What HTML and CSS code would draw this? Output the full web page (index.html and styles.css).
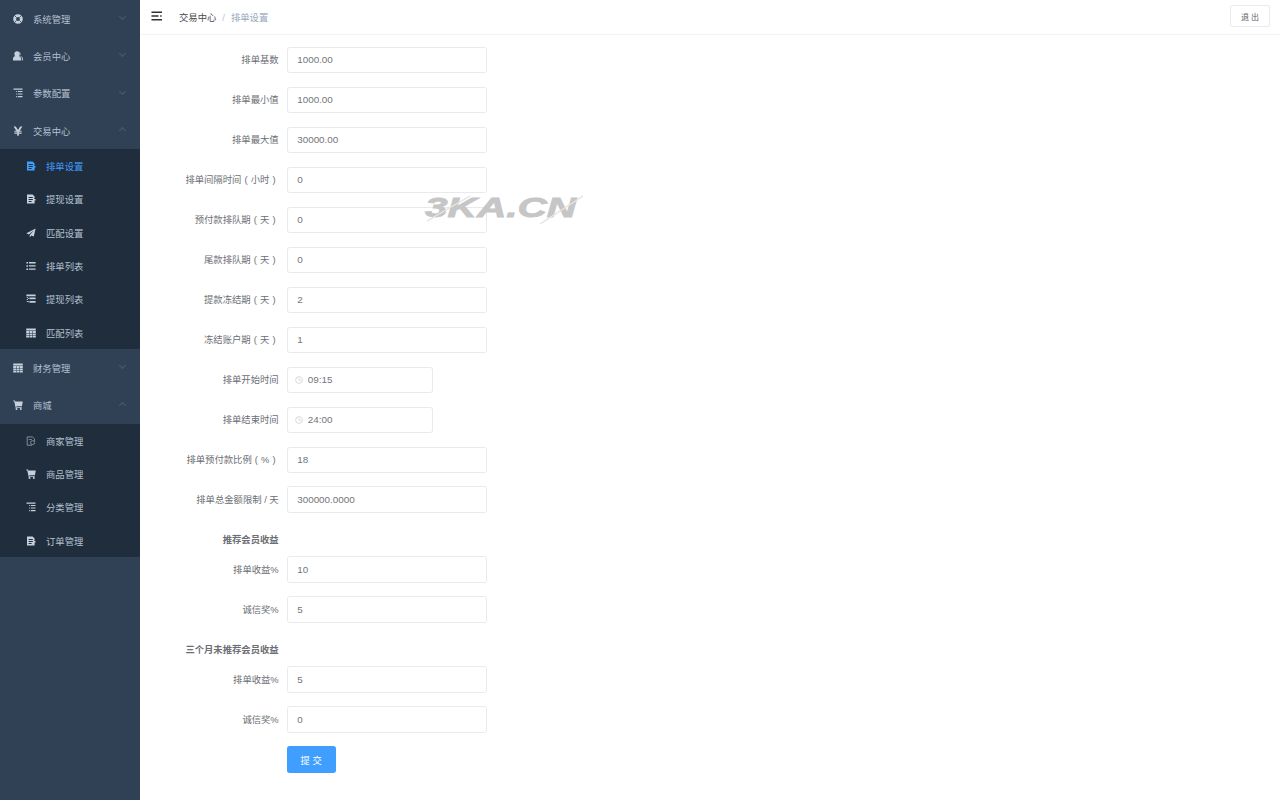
FILE: index.html
```html
<!DOCTYPE html>
<html>
<head>
    <meta charset="utf-8">
    <title>排单设置</title>
    <link rel="stylesheet" href="styles.css">
</head>
<body>
<svg class="defs" width="0" height="0">
    <symbol id="i-ring" viewBox="0 0 10 10"><path fill-rule="evenodd" d="M5 .2a4.8 4.8 0 1 1 0 9.600 4.800 4.800 0 0 1 0-9.600zM5 3.100a1.900 1.900 0 1 0 0 3.800 1.900 1.900 0 0 0 0-3.800z"/><path class="notch" d="M1.400 1.400L3.600 3.600M8.600 1.400L6.400 3.600M1.400 8.600L3.600 6.400M8.600 8.600L6.400 6.400"/></symbol>
    <symbol id="i-users" viewBox="0 0 10 10"><circle cx="4" cy="2.900" r="2.600"/><path d="M0 9.500V7.500C0 6 1.400 5.300 2.600 5h2.800c1.200.3 2.600 1 2.600 2.500v2z"/><path d="M6.500.8a2.400 2.400 0 0 1 0 4c1.800.3 3.500 1.200 3.500 2.800v1.900H8.800V7.300c0-1.100-.9-1.900-2.300-2.500z" opacity=".85"/></symbol>
    <symbol id="i-indent" viewBox="0 0 10 10"><path d="M.5 .6h9v1.100h-9zM5 3.100h4.500v1H5zM5 5.600h4.500v1H5zM5 8.100h4.500v1.100H5zM3.200 3.100h1v1h-1zM3.200 5.600h1v1h-1zM3.200 8.100h1v1.100h-1z"/></symbol>
    <symbol id="i-yen" viewBox="0 0 10 10"><path d="M.6 .4h2.200L5 4l2.200-3.600h2.200L6.700 4.700h1.900v1.100H5.800v.8h2.800v1.100H5.800v2H4.200v-2H1.400V6.600h2.800v-.8H1.400V4.700h1.900z"/></symbol>
    <symbol id="i-doc" viewBox="0 0 10 10"><path fill-rule="evenodd" d="M1 .4h5.600l2 2v2.100H8V5H9.500v1.600H8.600v3H1zM2.600 3v.9h4.200V3zm0 2v.9h4.200V5zm0 2v.9h3V7z"/></symbol>
    <symbol id="i-send" viewBox="0 0 10 10"><path d="M9.600.4L7.800 8.600 5.200 7.400 3.800 9.400V7L8 2.200 2.800 6.400.4 5.200z"/></symbol>
    <symbol id="i-list" viewBox="0 0 10 10"><path d="M.4 1h1.700v1.600H.4zM3 1.100h6.600v1.300H3zM.4 4.200h1.700v1.600H.4zM3 4.300h6.600v1.300H3zM.4 7.400h1.700v1.600H.4zM3 7.500h6.600v1.300H3z"/></symbol>
    <symbol id="i-tree" viewBox="0 0 10 10"><path d="M.4.500h9.200v1.800H.4zM3.400 3.500h6.200v1.800H3.400zM3.400 6.900h6.200v1.800H3.400zM.8 3h1v1h-1zM.8 5h1v1h-1zM.8 7h1v1h-1zM1.800 4h1v.9h-1zM1.800 7.300h1v.9h-1z"/></symbol>
    <symbol id="i-grid" viewBox="0 0 10 10"><path d="M.2.600h9.600v1.800H.2zM.2 2.900h2.900v2h-2.900zM3.600 2.900h2.800v2H3.600zM6.900 2.900h2.900v2H6.900zM.2 5.400h2.900v1.700h-2.900zM3.600 5.400h2.800v1.700H3.600zM6.900 5.400h2.900v1.700H6.900zM.2 7.600h2.900v1.800h-2.900zM3.600 7.600h2.800v1.800H3.600zM6.900 7.600h2.900v1.800H6.900z"/></symbol>
    <symbol id="i-cart" viewBox="0 0 10 10"><path d="M.2.400h1.800l.3 1.200h7.500L8.900 6.200H3.300l.2.700h5.300v.9H2.600L1.200 1.300H.2z"/><circle cx="3.500" cy="8.900" r="1"/><circle cx="7.800" cy="8.900" r="1"/></symbol>
    <symbol id="i-shop" viewBox="0 0 10 10"><path fill="none" stroke="currentColor" stroke-width="1" d="M6 9.200H1.200V.9h5.200l2.200 2v2.400"/><circle cx="6.600" cy="6.600" r="2" fill="none" stroke="currentColor" stroke-width="1"/><path d="M2.600 3.200h3.400v.8H2.600z"/></symbol>
</svg>

<div class="sidebar">
    <div class="menu-item"><svg class="icon"><use href="#i-ring"/></svg><span>系统管理</span><i class="arrow down"></i></div>
    <div class="menu-item"><svg class="icon"><use href="#i-users"/></svg><span>会员中心</span><i class="arrow down"></i></div>
    <div class="menu-item"><svg class="icon"><use href="#i-indent"/></svg><span>参数配置</span><i class="arrow down"></i></div>
    <div class="menu-item"><svg class="icon"><use href="#i-yen"/></svg><span>交易中心</span><i class="arrow up"></i></div>
    <ul class="sub-menu">
        <li class="active"><svg class="icon"><use href="#i-doc"/></svg><span>排单设置</span></li>
        <li><svg class="icon"><use href="#i-doc"/></svg><span>提现设置</span></li>
        <li><svg class="icon"><use href="#i-send"/></svg><span>匹配设置</span></li>
        <li><svg class="icon"><use href="#i-list"/></svg><span>排单列表</span></li>
        <li><svg class="icon"><use href="#i-tree"/></svg><span>提现列表</span></li>
        <li><svg class="icon"><use href="#i-grid"/></svg><span>匹配列表</span></li>
    </ul>
    <div class="menu-item"><svg class="icon"><use href="#i-grid"/></svg><span>财务管理</span><i class="arrow down"></i></div>
    <div class="menu-item"><svg class="icon"><use href="#i-cart"/></svg><span>商城</span><i class="arrow up"></i></div>
    <ul class="sub-menu">
        <li><svg class="icon dim"><use href="#i-shop"/></svg><span>商家管理</span></li>
        <li><svg class="icon"><use href="#i-cart"/></svg><span>商品管理</span></li>
        <li><svg class="icon"><use href="#i-indent"/></svg><span>分类管理</span></li>
        <li><svg class="icon"><use href="#i-doc"/></svg><span>订单管理</span></li>
    </ul>
</div>

<div class="main">
    <div class="navbar">
        <svg class="toggle" viewBox="0 0 12 10"><path d="M.5 .5h10.500v1.500H.5zM.5 4.200h7v1.500h-7zM.5 7.900h10.500v1.500H.5zM9.200 3.900l2.200 1-2.200 1z"/></svg>
        <div class="breadcrumb"><span class="crumb">交易中心</span><span class="sep">/</span><span class="current">排单设置</span></div>
        <button class="logout">退 出</button>
    </div>

    <form class="form">
        <div class="row"><label>排单基数</label><input class="input" value="1000.00"></div>
        <div class="row"><label>排单最小值</label><input class="input" value="1000.00"></div>
        <div class="row"><label>排单最大值</label><input class="input" value="30000.00"></div>
        <div class="row"><label>排单间隔时间<span class="paren">(</span>小时<span class="paren">)</span></label><input class="input" value="0"></div>
        <div class="row"><label>预付款排队期<span class="paren">(</span>天<span class="paren">)</span></label><input class="input" value="0"></div>
        <div class="row"><label>尾款排队期<span class="paren">(</span>天<span class="paren">)</span></label><input class="input" value="0"></div>
        <div class="row"><label>提款冻结期<span class="paren">(</span>天<span class="paren">)</span></label><input class="input" value="2"></div>
        <div class="row"><label>冻结账户期<span class="paren">(</span>天<span class="paren">)</span></label><input class="input" value="1"></div>
        <div class="row"><label>排单开始时间</label>
            <div class="time"><svg class="clock" viewBox="0 0 10 10"><circle cx="5" cy="5" r="4.200"/><path d="M5 2.600V5.300h2.200"/></svg><input value="09:15"></div>
        </div>
        <div class="row"><label>排单结束时间</label>
            <div class="time"><svg class="clock" viewBox="0 0 10 10"><circle cx="5" cy="5" r="4.200"/><path d="M5 2.600V5.300h2.200"/></svg><input value="24:00"></div>
        </div>
        <div class="row"><label>排单预付款比例<span class="paren">(</span>%<span class="paren">)</span></label><input class="input" value="18"></div>
        <div class="row"><label>排单总金额限制 / 天</label><input class="input" value="300000.0000"></div>

        <div class="row title"><label>推荐会员收益</label></div>
        <div class="row"><label>排单收益%</label><input class="input" value="10"></div>
        <div class="row"><label>诚信奖%</label><input class="input" value="5"></div>

        <div class="row title"><label>三个月未推荐会员收益</label></div>
        <div class="row"><label>排单收益%</label><input class="input" value="5"></div>
        <div class="row"><label>诚信奖%</label><input class="input" value="0"></div>

        <div class="row"><label></label><button type="button" class="submit">提 交</button></div>
    </form>

    <div class="watermark">
        <span>3KA.CN</span>
        <svg class="streaks" viewBox="0 0 160 30">
            <path d="M2 28L45 3M115 31L158 3"/>
            <path class="cut" d="M2 28L45 3M115 31L158 3"/>
        </svg>
    </div>
</div>
</body>
</html>
```

FILE: styles.css
```css
* {
    box-sizing: border-box;
    font-family: "Liberation Sans", "Noto Sans CJK SC", sans-serif;
}

html, body {
    height: 100%;
    margin: 0;
    overflow: hidden;
}

body {
    display: flex;
    font-size: 9.33px;
    color: #6c6e74;
}

.defs {
    position: absolute;
}

/* sidebar */
.sidebar {
    width: 140px;
    flex: none;
    background: #304156;
    color: #b4c0ce;
}

.menu-item {
    height: 37.33px;
    display: flex;
    align-items: center;
    padding: 0 13px;
}

.icon {
    width: 10px;
    height: 10px;
    margin-right: 10px;
    flex: none;
    fill: currentColor;
    color: #c6d0dc;
}

.icon.dim {
    color: #7f8c9b;
}

.notch {
    fill: none;
    stroke: #304156;
    stroke-width: .8;
}

.arrow {
    width: 5px;
    height: 5px;
    margin-left: auto;
    margin-right: 2px;
    border: solid #4b5c71;
    border-width: 0 1px 1px 0;
}

.arrow.down {
    margin-bottom: 4px;
    transform: rotate(45deg);
}

.arrow.up {
    margin-bottom: 0;
    transform: rotate(225deg);
}

.sub-menu {
    margin: 0;
    padding: 0;
    list-style: none;
    background: #1f2d3d;
}

.sub-menu li {
    height: 33.33px;
    display: flex;
    align-items: center;
    padding-left: 26px;
}

.sub-menu li.active,
.sub-menu li.active .icon {
    color: #409eff;
}

/* main */
.main {
    flex: 1;
    position: relative;
}

.navbar {
    height: 35px;
    display: flex;
    align-items: center;
    padding: 0 10px 0 11px;
    border-bottom: 1px solid #f2f3f5;
}

.toggle {
    width: 12px;
    height: 10px;
    margin-right: 16px;
    margin-bottom: 3px;
    fill: #303133;
}

.breadcrumb {
    flex: 1;
}

.crumb {
    color: #4a4b4f;
}

.sep {
    margin: 0 6px;
    color: #c0c4cc;
}

.current {
    color: #97a8be;
}

.logout {
    width: 40px;
    height: 22px;
    margin-bottom: 2px;
    padding: 0;
    font-size: 8px;
    color: #606266;
    background: #fff;
    border: 1px solid #e8eaee;
    border-radius: 2px;
}

.form {
    padding-top: 11.67px;
}

.row {
    display: flex;
    align-items: center;
    height: 26.67px;
    margin-bottom: 13.33px;
}

.row label {
    width: 138.67px;
    flex: none;
    margin-right: 8px;
    padding-bottom: 1px;
    text-align: right;
    white-space: nowrap;
}

/* brackets sit centred in a full character cell */
.paren {
    display: inline-block;
    width: 9.33px;
    text-align: center;
}

.row.title {
    margin-bottom: 3.33px;
}

.row.title label {
    font-weight: bold;
}

.input,
.time {
    height: 26.67px;
    background: #fff;
    border: 1px solid #e8eaee;
    border-radius: 2.67px;
    font-size: 9.9px;
    color: #73757a;
    outline: none;
}

.input {
    width: 200px;
    padding: 0 9.5px 1px;
}

.time {
    width: 146.67px;
    display: flex;
    align-items: center;
    padding-left: 7px;
}

.time input {
    width: 100px;
    padding: 0 0 1px;
    border: 0;
    outline: none;
    font-size: 9.9px;
    color: #73757a;
}

.clock {
    width: 8px;
    height: 8px;
    margin-right: 5px;
    fill: none;
    stroke: #c0c4cc;
    stroke-width: .8;
}

.submit {
    width: 49px;
    height: 26.67px;
    padding: 0;
    font-size: 9.33px;
    color: #fff;
    background: #409eff;
    border: 0;
    border-radius: 2.67px;
}

/* site stamp over the form */
.watermark {
    position: absolute;
    left: 285px;
    top: 193px;
    width: 160px;
    height: 30px;
}

.watermark span {
    display: inline-block;
    font-size: 28px;
    line-height: 30px;
    font-weight: bold;
    font-style: italic;
    color: #c6c6c6;
    -webkit-text-stroke: .8px #c6c6c6;
    white-space: nowrap;
    transform: scaleX(1.45);
    transform-origin: left center;
}

.streaks {
    position: absolute;
    left: 0;
    top: 0;
    width: 160px;
    height: 30px;
    overflow: visible;
    fill: none;
    stroke: #d2d2d2;
    stroke-width: 1.4;
}

.streaks .cut {
    stroke: #fff;
    stroke-width: .6;
}
```
